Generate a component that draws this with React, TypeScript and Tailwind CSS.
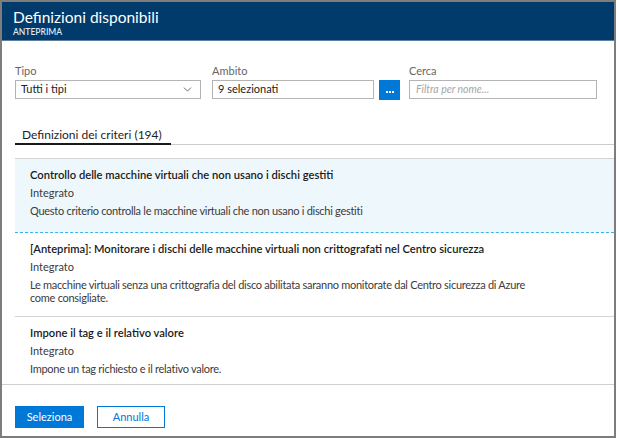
import { ChevronDown } from 'lucide-react'

const items = [
  {
    title: 'Controllo delle macchine virtuali che non usano i dischi gestiti',
    kind: 'Integrato',
    desc: ['Questo criterio controlla le macchine virtuali che non usano i dischi gestiti'],
    selected: true,
  },
  {
    title: '[Anteprima]: Monitorare i dischi delle macchine virtuali non crittografati nel Centro sicurezza',
    kind: 'Integrato',
    desc: [
      'Le macchine virtuali senza una crittografia del disco abilitata saranno monitorate dal Centro sicurezza di Azure',
      'come consigliate.',
    ],
  },
  {
    title: 'Impone il tag e il relativo valore',
    kind: 'Integrato',
    desc: ['Impone un tag richiesto e il relativo valore.'],
  },
]

export default function App() {
  return (
    <div className="w-[617px] h-[438px] bg-white font-['Lato','Noto_Sans',sans-serif] text-[#1e1e1e]">
      <div className="flex flex-col w-[616px] h-[438px] border-2 border-[#7d7d7d] bg-white">
        {/* Header */}
        <div className="h-[39px] shrink-0 bg-[#003b6b] border-b border-[#5d7f9f] pl-[11px] pt-[6px]">
          <div className="text-[15.5px] leading-[19px] text-white">Definizioni disponibili</div>
          <div className="text-[8.5px] leading-[11px] font-semibold text-[#dfe7ef]">ANTEPRIMA</div>
        </div>

        {/* Filters */}
        <div className="flex items-end pl-[13px] pt-[22px] shrink-0">
          <div className="w-[186px]">
            <div className="text-[11px] leading-[15px] mb-[2px] text-[#666]">Tipo</div>
            <div className="h-[19px] border border-[#b4b4b4] flex items-center justify-between pl-[5px] pr-[6px]">
              <span className="text-[11px] text-[#222]">Tutti i tipi</span>
              <ChevronDown size={13} strokeWidth={1.3} className="text-[#333]" />
            </div>
          </div>
          <div className="w-[162px] ml-[11px]">
            <div className="text-[11px] leading-[15px] mb-[2px] text-[#666]">Ambito</div>
            <div className="h-[19px] border border-[#b4b4b4] flex items-center pl-[5px]">
              <span className="text-[11px] text-[#222]">9 selezionati</span>
            </div>
          </div>
          <div className="w-[21px] h-[20px] ml-[5px] mb-[-1px] bg-[#0078d7] flex items-end justify-center pb-[7px]">
            <div className="w-[8px] h-[2px] border-t-2 border-dotted border-white" />
          </div>
          <div className="w-[188px] ml-[9px]">
            <div className="text-[11px] leading-[15px] mb-[2px] text-[#666]">Cerca</div>
            <div className="h-[19px] border border-[#b4b4b4] flex items-center pl-[6px]">
              <span className="text-[10.5px] italic text-[#a6a6a6]">Filtra per nome...</span>
            </div>
          </div>
        </div>

        {/* Tabs */}
        <div className="mt-[28px] ml-[13px] border-b border-[#cccccc] shrink-0 flex">
          <div className="w-[156px] pl-[7px] text-[12px] leading-[16px] border-b-2 border-[#1a1a1a] mb-[-1px]">
            Definizioni dei criteri (194)
          </div>
        </div>

        {/* List */}
        <div className="mt-[13px] ml-[13px] flex-1 overflow-hidden border-t border-[#d4d4d4]">
          {items.map((it, i) => (
            <div
              key={i}
              className={
                it.selected
                  ? 'min-h-[74px] pl-[15px] pt-[9px] pb-[12px] bg-[#eef7fc] border-b border-dashed border-[#3fb4e6]'
                  : 'min-h-[74px] pl-[15px] pt-[9px] pb-[12px] border-b border-[#d4d4d4]'
              }
            >
              <div className="text-[11.2px] leading-[14px] font-semibold text-[#1a1a1a] mb-[4px]">{it.title}</div>
              <div className="text-[11px] leading-[14px] text-[#3b3b3b] mb-[4px]">{it.kind}</div>
              {it.desc.map((d, j) => (
                <div key={j} className="text-[11px] leading-[13px] tracking-[-0.28px] text-[#3b3b3b]">{d}</div>
              ))}
            </div>
          ))}
        </div>

        {/* Footer */}
        <div className="h-[52px] shrink-0 border-t border-[#cfcfcf] pl-[13px] pt-[21px] flex items-start gap-[13px]">
          <button className="w-[69px] h-[22px] bg-[#0078d7] text-white text-[11px] leading-[20px]">Seleziona</button>
          <button className="w-[68px] h-[22px] border border-[#0078d7] text-[#0078d7] text-[11px] leading-[20px] bg-white">Annulla</button>
        </div>
      </div>
    </div>
  )
}
